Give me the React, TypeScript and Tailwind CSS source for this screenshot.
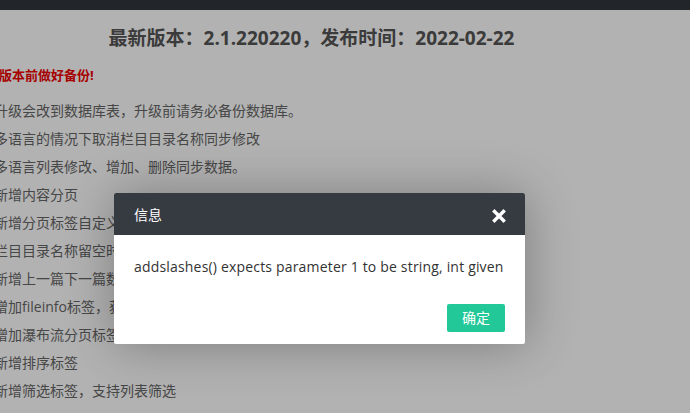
import React from "react";

const lines = [
  "升级会改到数据库表，升级前请务必备份数据库。",
  "多语言的情况下取消栏目目录名称同步修改",
  "多语言列表修改、增加、删除同步数据。",
  "新增内容分页",
  "新增分页标签自定义样式，支持多种格式",
  "栏目目录名称留空时自动生成拼音目录",
  "新增上一篇下一篇数据调用标签",
  "增加fileinfo标签，获取附件文件信息",
  "增加瀑布流分页标签，支持ajax加载",
  "新增排序标签",
  "新增筛选标签，支持列表筛选",
];

export default function App() {
  return (
    <div
      className="relative w-[690px] h-[413px] overflow-hidden bg-white"
      style={{ fontFamily: '"Open Sans", "Noto Sans CJK SC", sans-serif' }}
    >
      <div className="h-[10px] bg-[#32363d]" />
      <div className="w-[635px] -ml-[6px]">
        <h1 className="mt-[14px] text-center text-[19px] leading-[28px] font-bold text-[#555]">
          最新版本：2.1.220220，发布时间：2022-02-22
        </h1>
        <p className="mt-[9px] ml-[5px] text-[13px] leading-[28px] font-bold text-[#f00000]">
          版本前做好备份!
        </p>
        <ul className="mt-[8px] text-[14px] leading-[28px] text-[#666]">
          {lines.map((t) => (
            <li key={t} className="whitespace-nowrap">
              {t}
            </li>
          ))}
        </ul>
      </div>

      <div className="absolute inset-0 bg-black/30" />

      <div className="absolute left-[114px] top-[193px] w-[411px] rounded-[2px] bg-white shadow-[1px_1px_50px_rgba(0,0,0,0.3)]">
        <div className="flex h-[42px] items-center justify-between rounded-t-[2px] bg-[#363a41] pl-[20px] pr-[19px]">
          <span className="text-[14px] text-white">信息</span>
          <svg width="14" height="14" viewBox="0 0 14 14" className="mt-[3px]">
            <path
              d="M2.5 2.5 L11.5 11.5 M11.5 2.5 L2.5 11.5"
              stroke="#fff"
              strokeWidth="3.4"
              strokeLinecap="square"
            />
          </svg>
        </div>
        <div className="px-[20px] py-[20px] text-[14px] leading-[24px] tracking-[0.18px] text-[#333] whitespace-nowrap">
          addslashes() expects parameter 1 to be string, int given
        </div>
        <div className="flex justify-end px-[15px] pb-[12px]">
          <button className="mx-[5px] mt-[5px] h-[28px] rounded-[2px] bg-[#22c898] px-[15px] text-[14px] leading-[28px] text-white">
            确定
          </button>
        </div>
      </div>
    </div>
  );
}
